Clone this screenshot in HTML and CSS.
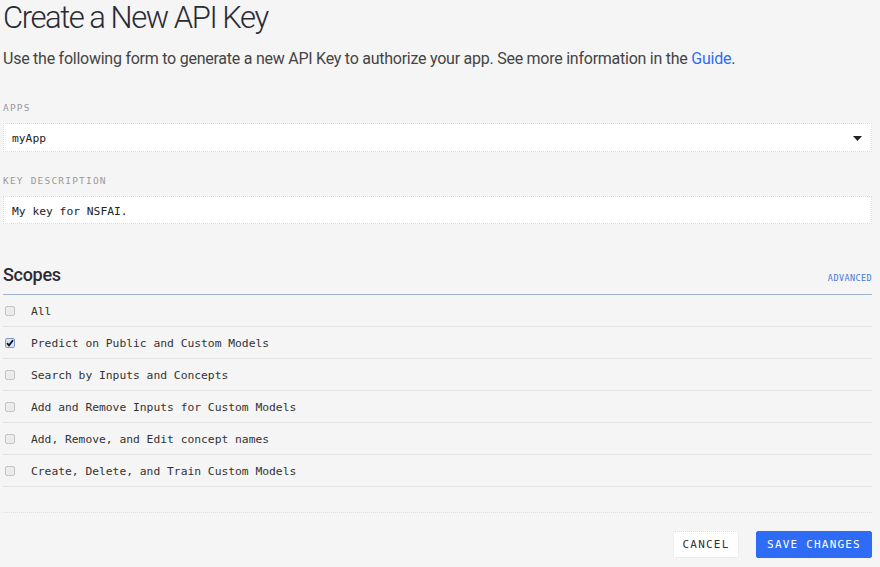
FILE: index.html
```html
<!DOCTYPE html>
<html>
<head>
<meta charset="utf-8">
<link rel="stylesheet" href="styles.css">
</head>
<body>
<div class="page">
  <h1 class="title">Create a New API Key</h1>
  <p class="lead">Use the following form to generate a new API Key to authorize your app. See more information in the <a class="link" href="#">Guide</a>.</p>

  <div class="field field-apps">
    <div class="label">APPS</div>
    <div class="box select">
      <span class="value">myApp</span>
      <svg class="caret" width="9" height="5" viewBox="0 0 9 5"><path d="M0 0H9L4.5 5Z" fill="#222"/></svg>
    </div>
  </div>

  <div class="field field-desc">
    <div class="label">KEY DESCRIPTION</div>
    <div class="box input"><span class="value">My key for NSFAI.</span></div>
  </div>

  <div class="scopes-head">
    <h2 class="scopes-title">Scopes</h2>
    <a class="advanced" href="#">ADVANCED</a>
  </div>
  <ul class="scopes">
    <li class="scope"><span class="cb"></span><span class="scope-text">All</span></li>
    <li class="scope"><span class="cb checked"><svg width="8" height="8" viewBox="0 0 8 8"><path d="M1 4.2L3 6.3L7 1.2" stroke="#111" stroke-width="1.8" fill="none"/></svg></span><span class="scope-text">Predict on Public and Custom Models</span></li>
    <li class="scope"><span class="cb"></span><span class="scope-text">Search by Inputs and Concepts</span></li>
    <li class="scope"><span class="cb"></span><span class="scope-text">Add and Remove Inputs for Custom Models</span></li>
    <li class="scope"><span class="cb"></span><span class="scope-text">Add, Remove, and Edit concept names</span></li>
    <li class="scope"><span class="cb"></span><span class="scope-text">Create, Delete, and Train Custom Models</span></li>
  </ul>

  <div class="footer">
    <button class="btn btn-cancel">CANCEL</button>
    <button class="btn btn-save">SAVE CHANGES</button>
  </div>
</div>
</body>
</html>
```
FILE: styles.css
```css
html, body {
  margin: 0;
  padding: 0;
  background: #f5f5f5;
}
.page {
  padding: 0 8px 0 3px;
  font-family: Roboto, "Liberation Sans", sans-serif;
  color: #333;
}
.title {
  margin: 0;
  font-size: 31px;
  line-height: 36px;
  font-weight: 300;
  letter-spacing: -1.45px;
  color: #2a2a33;
}
.lead {
  margin: 11px 0 0;
  font-size: 16px;
  line-height: 24px;
  letter-spacing: -0.25px;
  color: #444;
}
.link {
  color: #2f6cf6;
  text-decoration: none;
}
.label {
  font-family: "DejaVu Sans Mono", monospace;
  font-size: 9.5px;
  line-height: 14px;
  letter-spacing: 1.2px;
  color: #999;
}
.field-apps { margin-top: 30px; }
.field-desc { margin-top: 22px; }
.box {
  margin-top: 8px;
  box-sizing: border-box;
  background: #fff;
  border: 1px dotted #dcdcdc;
  display: flex;
  align-items: center;
  padding: 2px 8px 0;
  font-family: "DejaVu Sans Mono", monospace;
  font-size: 11.3px;
  color: #222;
}
.select { height: 29px; justify-content: space-between; }
.input { height: 28px; }
.caret { margin-right: 1px; }
.scopes-head {
  margin-top: 39px;
  height: 32px;
  box-sizing: border-box;
  border-bottom: 1px solid #9fb2d4;
  display: flex;
  justify-content: space-between;
  align-items: flex-start;
}
.scopes-title {
  margin: 0;
  font-size: 18px;
  line-height: 24px;
  font-weight: 500;
  letter-spacing: -0.3px;
  color: #2a2a33;
}
.advanced {
  margin-top: 8px;
  font-family: "DejaVu Sans Mono", monospace;
  font-size: 8.5px;
  line-height: 14px;
  letter-spacing: 0.4px;
  color: #4a78d6;
  text-decoration: none;
}
.scopes {
  list-style: none;
  margin: 0;
  padding: 0;
}
.scope {
  height: 32px;
  box-sizing: border-box;
  border-bottom: 1px solid #e3e3e3;
  display: flex;
  align-items: center;
  padding-top: 1px;
  font-family: "DejaVu Sans Mono", monospace;
  font-size: 11.3px;
  color: #333;
}
.cb {
  margin-left: 2px;
  width: 10px;
  height: 10px;
  box-sizing: border-box;
  border: 1px solid #c4c4c4;
  border-radius: 2px;
  background: #ececec;
  display: flex;
  align-items: center;
  justify-content: center;
}
.cb.checked {
  border: 1px solid #7f9ccf;
  background: #d6e1f3;
}
.scope-text { margin-left: 16px; }
.footer {
  margin-top: 25px;
  border-top: 1px dotted #e0e0e0;
  padding-top: 18px;
  display: flex;
  justify-content: flex-end;
  gap: 17px;
}
.btn {
  height: 27px;
  box-sizing: border-box;
  font-family: "DejaVu Sans Mono", monospace;
  font-size: 11px;
  letter-spacing: 1.2px;
  border-radius: 2px;
  padding: 0;
  white-space: nowrap;
}
.btn-cancel {
  width: 66px;
  background: #fff;
  border: 1px dotted #ddd;
  color: #333;
}
.btn-save {
  width: 116px;
  background: #2f6cf6;
  border: 1px solid #2f6cf6;
  color: #fff;
}
```
